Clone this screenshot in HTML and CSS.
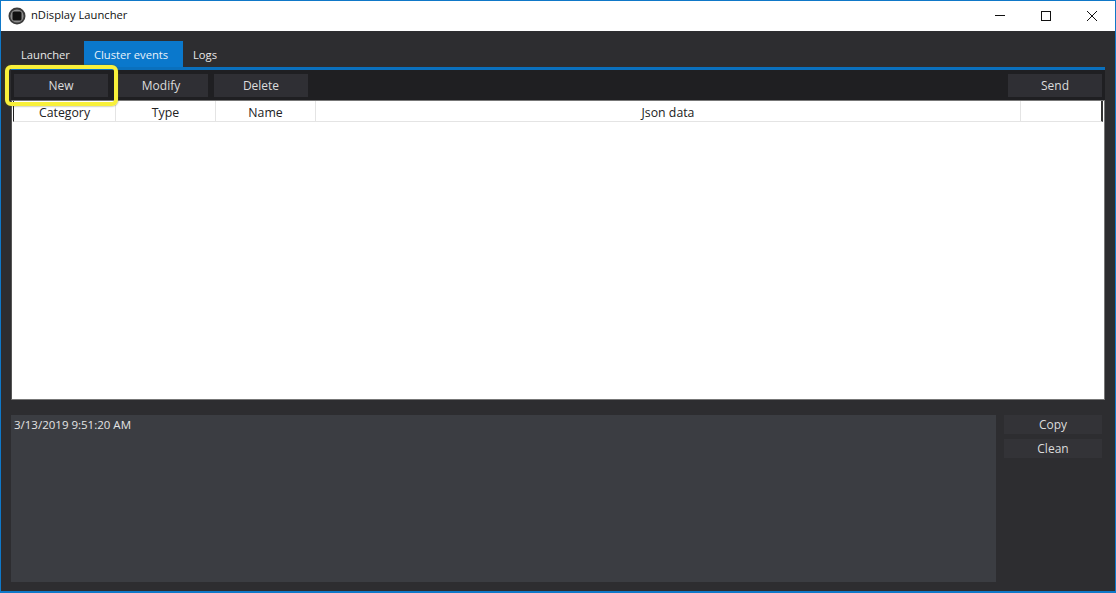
FILE: index.html
```html
<!DOCTYPE html>
<html lang="en">
<head>
<meta charset="utf-8">
<title>nDisplay Launcher</title>
<link rel="stylesheet" href="styles.css">
</head>
<body>
<div class="window">
  <header class="titlebar">
    <svg class="app-icon" width="18" height="18" viewBox="0 0 18 18">
      <circle cx="9" cy="9" r="8.5" fill="#3a3a3a"/>
      <circle cx="9" cy="9" r="6.6" fill="#8d8d8d"/>
      <rect x="4.5" y="4.5" width="9" height="9" rx="1.5" fill="#111"/>
    </svg>
    <span class="app-title">nDisplay Launcher</span>
    <div class="win-controls">
      <svg class="win-btn" width="46" height="30" viewBox="0 0 46 30"><path d="M18 14.5h10" stroke="#111" fill="none"/></svg>
      <svg class="win-btn" width="46" height="30" viewBox="0 0 46 30"><rect x="18.5" y="10.5" width="9" height="9" stroke="#111" fill="none"/></svg>
      <svg class="win-btn" width="46" height="30" viewBox="0 0 46 30"><path d="M18 10l10 10M28 10L18 20" stroke="#111" fill="none"/></svg>
    </div>
  </header>
  <main class="body">
    <nav class="tabs">
      <span class="tab tab-first">Launcher</span>
      <span class="tab tab-active">Cluster events</span>
      <span class="tab">Logs</span>
    </nav>
    <div class="toolbar">
      <div class="btn-wrap">
        <button class="btn">New</button>
        <span class="highlight"></span>
      </div>
      <button class="btn">Modify</button>
      <button class="btn">Delete</button>
      <button class="btn btn-send">Send</button>
    </div>
    <section class="table">
      <div class="thead">
        <span class="th th-cat">Category</span>
        <span class="th th-fixed">Type</span>
        <span class="th th-fixed">Name</span>
        <span class="th th-json">Json data</span>
        <span class="th th-end"></span>
      </div>
    </section>
    <section class="bottom">
      <div class="log">3/13/2019 9:51:20 AM</div>
      <div class="side">
        <button class="side-btn">Copy</button>
        <button class="side-btn">Clean</button>
      </div>
    </section>
  </main>
</div>
</body>
</html>
```
FILE: styles.css
```css
* { box-sizing: border-box; }
html, body { margin: 0; height: 100%; }
body { font-family: "Open Sans", "Noto Sans", sans-serif; font-size: 12px; overflow: hidden; }
.window { width: 1116px; height: 593px; border: 1px solid #0f78c8; border-bottom-width: 2px; display: flex; flex-direction: column; background: #2d2d30; }
.titlebar { height: 30px; flex: none; background: #fff; display: flex; align-items: center; padding-left: 7px; color: #111; }
.app-icon { flex: none; }
.app-title { margin-left: 5px; font-size: 11.2px; line-height: 28px; height: 30px; }
.win-controls { margin-left: auto; display: flex; margin-right: -1px; transform: translateX(-1px); }
.win-btn { display: block; }
.body { flex: 1; padding: 10px 10px 0 10px; display: flex; flex-direction: column; }
.tabs { display: flex; height: 29px; border-bottom: 3px solid #0a70bd; flex: none; font-size: 11.2px; }
.tab { height: 26px; line-height: 27px; padding: 0 10px; color: #e8e8e8; white-space: nowrap; }
.tab-first { width: 73px; }
.tab-active { width: 99px; background: #0a78cc; color: #e8f2fa; }
.toolbar { height: 30px; flex: none; background: #1f1f22; display: flex; align-items: flex-start; gap: 6px; padding: 4px 3px 0 3px; }
.btn-wrap { position: relative; display: flex; }
.btn { width: 94px; height: 23px; border: 0; padding: 0; background: #2f2f34; color: #dcdcdc; font: inherit; }
.btn-send { margin-left: auto; }
.highlight { position: absolute; left: -9px; top: -9px; width: 113px; height: 41px; border: 4px solid #f8f03a; border-radius: 6px; box-shadow: 0 0 2px rgba(90,90,20,.8); }
.table { height: 300px; flex: none; margin: 0; background: #fff; border: 1px solid #777; border-left-color: #555; }
.thead { height: 21px; display: flex; border-bottom: 1px solid #e4e4e4; margin-left: 1px; margin-right: 1px; border-left: 1px solid #222; border-right: 2px solid #333; color: #222; font-size: 12.3px; }
.th { line-height: 23px; text-align: center; border-right: 1px solid #e4e4e4; flex: none; }
.th-cat { width: 102px; }
.th-fixed { width: 100px; }
.th-json { width: 705px; }
.th-end { flex: 1; border-right: 0; }
.bottom { flex: 1; display: flex; margin-top: 15px; margin-bottom: 9px; }
.log { width: 985px; flex: none; background: #3b3d42; color: #e4e4e4; padding: 2px 3px; line-height: 15px; font-size: 11.5px; }
.side { flex: 1; display: flex; flex-direction: column; gap: 5px; padding-left: 8px; padding-right: 3px; }
.side-btn { height: 19px; border: 0; padding: 0; background: #333337; color: #dcdcdc; font: inherit; }
```
